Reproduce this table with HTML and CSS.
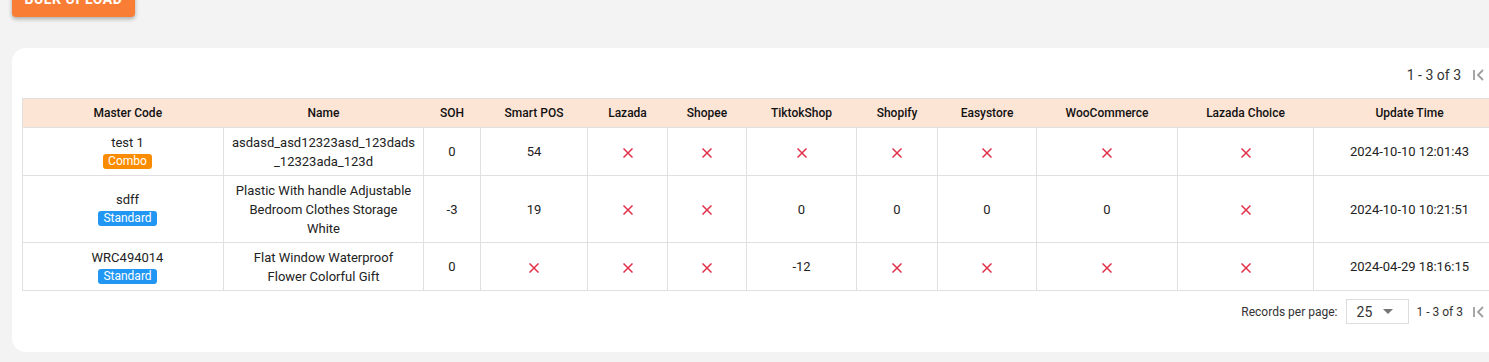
FILE: index.html
```html
<!DOCTYPE html>
<html>
<head>
<meta charset="utf-8">
<link rel="stylesheet" href="styles.css">
</head>
<body>
<div class="page">
  <div class="toolbar">
    <button class="btn-upload">BULK UPLOAD</button>
  </div>
  <div class="card">
    <div class="pager pager-top">
      <span class="range">1 - 3 of 3</span>
      <span class="nav"><svg width="14" height="14" viewBox="0 0 14 14"><path d="M2 2v10M11 2L6 7l5 5" fill="none" stroke="#9e9e9e" stroke-width="1.8"/></svg></span>
      <span class="nav"><svg width="14" height="14" viewBox="0 0 14 14"><path d="M9 2L4 7l5 5" fill="none" stroke="#9e9e9e" stroke-width="1.8"/></svg></span>
      <span class="nav"><svg width="14" height="14" viewBox="0 0 14 14"><path d="M5 2l5 5-5 5" fill="none" stroke="#9e9e9e" stroke-width="1.8"/></svg></span>
      <span class="nav"><svg width="14" height="14" viewBox="0 0 14 14"><path d="M12 2v10M3 2l5 5-5 5" fill="none" stroke="#9e9e9e" stroke-width="1.8"/></svg></span>
    </div>
    <table class="grid">
      <colgroup>
        <col style="width:201px"><col style="width:200px"><col style="width:57px"><col style="width:107px">
        <col style="width:80px"><col style="width:79px"><col style="width:110px"><col style="width:81px">
        <col style="width:99px"><col style="width:141px"><col style="width:136px"><col style="width:192px">
        <col>
      </colgroup>
      <thead>
        <tr>
          <th class="first">Master Code</th><th>Name</th><th>SOH</th><th>Smart POS</th><th>Lazada</th><th>Shopee</th><th>TiktokShop</th><th>Shopify</th><th>Easystore</th><th>WooCommerce</th><th>Lazada Choice</th><th>Update Time</th><th>Action</th>
        </tr>
      </thead>
      <tbody>
        <tr>
          <td class="first">test 1<br><span class="badge combo">Combo</span></td>
          <td>asdasd_asd12323asd_123dads<br>_12323ada_123d</td>
          <td>0</td><td>54</td>
          <td><svg class="x" viewBox="0 0 10 10"><path d="M0.5 0.5l9 9M9.5 0.5l-9 9"/></svg></td>
          <td><svg class="x" viewBox="0 0 10 10"><path d="M0.5 0.5l9 9M9.5 0.5l-9 9"/></svg></td>
          <td><svg class="x" viewBox="0 0 10 10"><path d="M0.5 0.5l9 9M9.5 0.5l-9 9"/></svg></td>
          <td><svg class="x" viewBox="0 0 10 10"><path d="M0.5 0.5l9 9M9.5 0.5l-9 9"/></svg></td>
          <td><svg class="x" viewBox="0 0 10 10"><path d="M0.5 0.5l9 9M9.5 0.5l-9 9"/></svg></td>
          <td><svg class="x" viewBox="0 0 10 10"><path d="M0.5 0.5l9 9M9.5 0.5l-9 9"/></svg></td>
          <td><svg class="x" viewBox="0 0 10 10"><path d="M0.5 0.5l9 9M9.5 0.5l-9 9"/></svg></td>
          <td>2024-10-10 12:01:43</td>
          <td></td>
        </tr>
        <tr>
          <td class="first">sdff<br><span class="badge standard">Standard</span></td>
          <td>Plastic With handle Adjustable<br>Bedroom Clothes Storage<br>White</td>
          <td>-3</td><td>19</td>
          <td><svg class="x" viewBox="0 0 10 10"><path d="M0.5 0.5l9 9M9.5 0.5l-9 9"/></svg></td>
          <td><svg class="x" viewBox="0 0 10 10"><path d="M0.5 0.5l9 9M9.5 0.5l-9 9"/></svg></td>
          <td>0</td><td>0</td><td>0</td><td>0</td>
          <td><svg class="x" viewBox="0 0 10 10"><path d="M0.5 0.5l9 9M9.5 0.5l-9 9"/></svg></td>
          <td>2024-10-10 10:21:51</td>
          <td></td>
        </tr>
        <tr>
          <td class="first">WRC494014<br><span class="badge standard">Standard</span></td>
          <td>Flat Window Waterproof<br>Flower Colorful Gift</td>
          <td>0</td>
          <td><svg class="x" viewBox="0 0 10 10"><path d="M0.5 0.5l9 9M9.5 0.5l-9 9"/></svg></td>
          <td><svg class="x" viewBox="0 0 10 10"><path d="M0.5 0.5l9 9M9.5 0.5l-9 9"/></svg></td>
          <td><svg class="x" viewBox="0 0 10 10"><path d="M0.5 0.5l9 9M9.5 0.5l-9 9"/></svg></td>
          <td>-12</td>
          <td><svg class="x" viewBox="0 0 10 10"><path d="M0.5 0.5l9 9M9.5 0.5l-9 9"/></svg></td>
          <td><svg class="x" viewBox="0 0 10 10"><path d="M0.5 0.5l9 9M9.5 0.5l-9 9"/></svg></td>
          <td><svg class="x" viewBox="0 0 10 10"><path d="M0.5 0.5l9 9M9.5 0.5l-9 9"/></svg></td>
          <td><svg class="x" viewBox="0 0 10 10"><path d="M0.5 0.5l9 9M9.5 0.5l-9 9"/></svg></td>
          <td>2024-04-29 18:16:15</td>
          <td></td>
        </tr>
      </tbody>
    </table>
    <div class="pager pager-bottom">
      <span class="label">Records per page:</span>
      <span class="select"><span class="val">25</span><svg width="10" height="5" viewBox="0 0 10 5"><path d="M0 0h10L5 5z" fill="#757575"/></svg></span>
      <span class="range">1 - 3 of 3</span>
      <span class="nav"><svg width="14" height="14" viewBox="0 0 14 14"><path d="M2 2v10M11 2L6 7l5 5" fill="none" stroke="#9e9e9e" stroke-width="1.8"/></svg></span>
      <span class="nav"><svg width="14" height="14" viewBox="0 0 14 14"><path d="M9 2L4 7l5 5" fill="none" stroke="#9e9e9e" stroke-width="1.8"/></svg></span>
      <span class="nav"><svg width="14" height="14" viewBox="0 0 14 14"><path d="M5 2l5 5-5 5" fill="none" stroke="#9e9e9e" stroke-width="1.8"/></svg></span>
      <span class="nav"><svg width="14" height="14" viewBox="0 0 14 14"><path d="M12 2v10M3 2l5 5-5 5" fill="none" stroke="#9e9e9e" stroke-width="1.8"/></svg></span>
    </div>
  </div>
</div>
</body>
</html>
```

FILE: styles.css
```css
html, body {
  margin: 0;
  padding: 0;
  overflow: hidden;
  background: #f3f3f3;
  font-family: Roboto, "Liberation Sans", sans-serif;
  color: rgba(0, 0, 0, 0.87);
}

.page {
  padding: 0 0 0 12px;
  width: 1568px;
}

.toolbar {
  margin-top: -19px;
  height: 36px;
}

.btn-upload {
  width: 123px;
  height: 36px;
  border: none;
  border-radius: 4px;
  background: #f97d35;
  color: #fff;
  font-family: Roboto, "Liberation Sans", sans-serif;
  font-weight: 700;
  font-size: 14px;
  letter-spacing: 0.6px;
  box-shadow: 0 2px 4px rgba(0, 0, 0, 0.3);
}

.card {
  margin-top: 31px;
  background: #fff;
  border-radius: 14px;
  padding: 12px 10px 0 10px;
  height: 292px;
}

.pager {
  display: flex;
  justify-content: flex-end;
  align-items: center;
}

.pager-top {
  height: 30px;
  margin-bottom: 8px;
  font-size: 14px;
  color: #333;
}

.range {
  margin-right: 5px;
}

.nav {
  width: 26px;
  display: flex;
  justify-content: center;
  align-items: center;
}

.grid {
  width: 1548px;
  table-layout: fixed;
  border-collapse: collapse;
  border: 1px solid #e0e0e0;
  font-size: 13px;
}

.grid th {
  background: #fde5d6;
  font-weight: 500;
  font-size: 12px;
  color: #111;
  height: 28px;
  padding: 0 8px;
  text-align: center;
}

.grid td {
  border: 1px solid #e0e0e0;
  text-align: center;
  line-height: 19px;
  padding: 4.5px 8px;
  color: #222;
}

.grid .first {
  padding-left: 17px;
}

.badge {
  display: inline-block;
  color: #fff;
  font-size: 12px;
  line-height: 15px;
  border-radius: 3px;
  padding: 0 5px;
  vertical-align: top;
  margin-top: 2px;
}

.combo {
  background: #fb8c00;
}

.standard {
  background: #2196f3;
}

.x {
  width: 10px;
  height: 10px;
  display: inline-block;
  vertical-align: middle;
}

.x path {
  stroke: #e0304a;
  stroke-width: 1.5;
  fill: none;
}

.pager-bottom {
  margin-top: 8px;
  height: 25px;
  font-size: 12px;
  color: #333;
}

.pager-bottom .range {
  margin-right: 3px;
}

.label {
  margin-right: 8px;
}

.select {
  width: 63px;
  height: 25px;
  border: 1px solid #ddd;
  box-sizing: border-box;
  display: flex;
  align-items: center;
  justify-content: space-between;
  padding: 0 15px 0 10px;
  margin-right: 8px;
  font-size: 14px;
}
```
